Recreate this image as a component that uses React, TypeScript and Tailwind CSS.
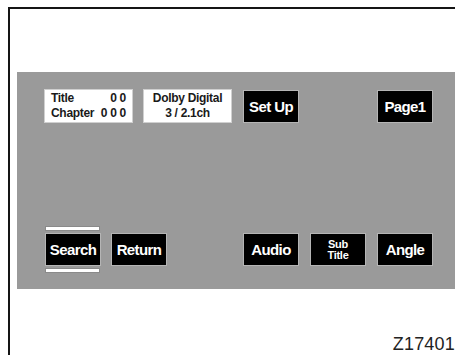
import type { ReactNode } from 'react';

const font = { fontFamily: '"Liberation Sans", Arial, sans-serif' };

function Key({ children, className = '', text = 'text-[15px] leading-none tracking-[-0.6px]' }: { children: ReactNode; className?: string; text?: string }) {
  return (
    <div
      className={`flex h-[33px] w-[56px] items-center justify-center border border-[#b5b5b5] bg-black font-bold text-white ${text} ${className}`}
    >
      {children}
    </div>
  );
}

function InfoBox({ children, className = '' }: { children: ReactNode; className?: string }) {
  return (
    <div
      className={`flex h-[34px] w-[89px] flex-col justify-center border border-[#d0d0d0] bg-white text-[12px] font-bold leading-[15px] tracking-[-0.3px] text-[#1a1a1a] ${className}`}
    >
      {children}
    </div>
  );
}

export default function App() {
  return (
    <div className="relative h-[355px] w-[455px] overflow-hidden bg-white" style={font}>
      <div className="ml-[8px] mt-[7px] flex h-[348px] flex-col border-l-2 border-t-2 border-[#151515]">
        {/* gray control band */}
        <div className="ml-[7px] mt-[63px] flex h-[217px] flex-col justify-between bg-[#9a9a9a] pb-[16px] pt-[17px]">
          <div className="flex items-start pl-[27px]">
            <InfoBox className="px-[6px]">
              <div className="flex justify-between">
                <span>Title</span>
                <span>0 0</span>
              </div>
              <div className="flex justify-between">
                <span>Chapter</span>
                <span>0 0 0</span>
              </div>
            </InfoBox>
            <InfoBox className="ml-[10px] items-center">
              <span>Dolby Digital</span>
              <span>3 / 2.1ch</span>
            </InfoBox>
            <Key className="ml-[11px] mt-px">Set Up</Key>
            <Key className="ml-[78px] mt-px w-[55px]">Page1</Key>
          </div>

          <div className="flex items-center pl-[28px]">
            <div className="flex w-[55px] flex-col gap-[2px]">
              <div className="h-[5px] border border-[#8a8a8a] bg-white" />
              <Key className="w-[55px]">Search</Key>
              <div className="h-[5px] border border-[#8a8a8a] bg-white" />
            </div>
            <Key className="ml-[11px]">Return</Key>
            <Key className="ml-[76px]">Audio</Key>
            <Key className="ml-[11px] flex-col" text="text-[11px] leading-[11px] tracking-[-0.3px]">
              <span>Sub</span>
              <span>Title</span>
            </Key>
            <Key className="ml-[11px]">Angle</Key>
          </div>
        </div>

        <div className="mt-[46px] text-right text-[18px] leading-none tracking-[0.2px] text-[#222]">Z17401</div>
      </div>
    </div>
  );
}
